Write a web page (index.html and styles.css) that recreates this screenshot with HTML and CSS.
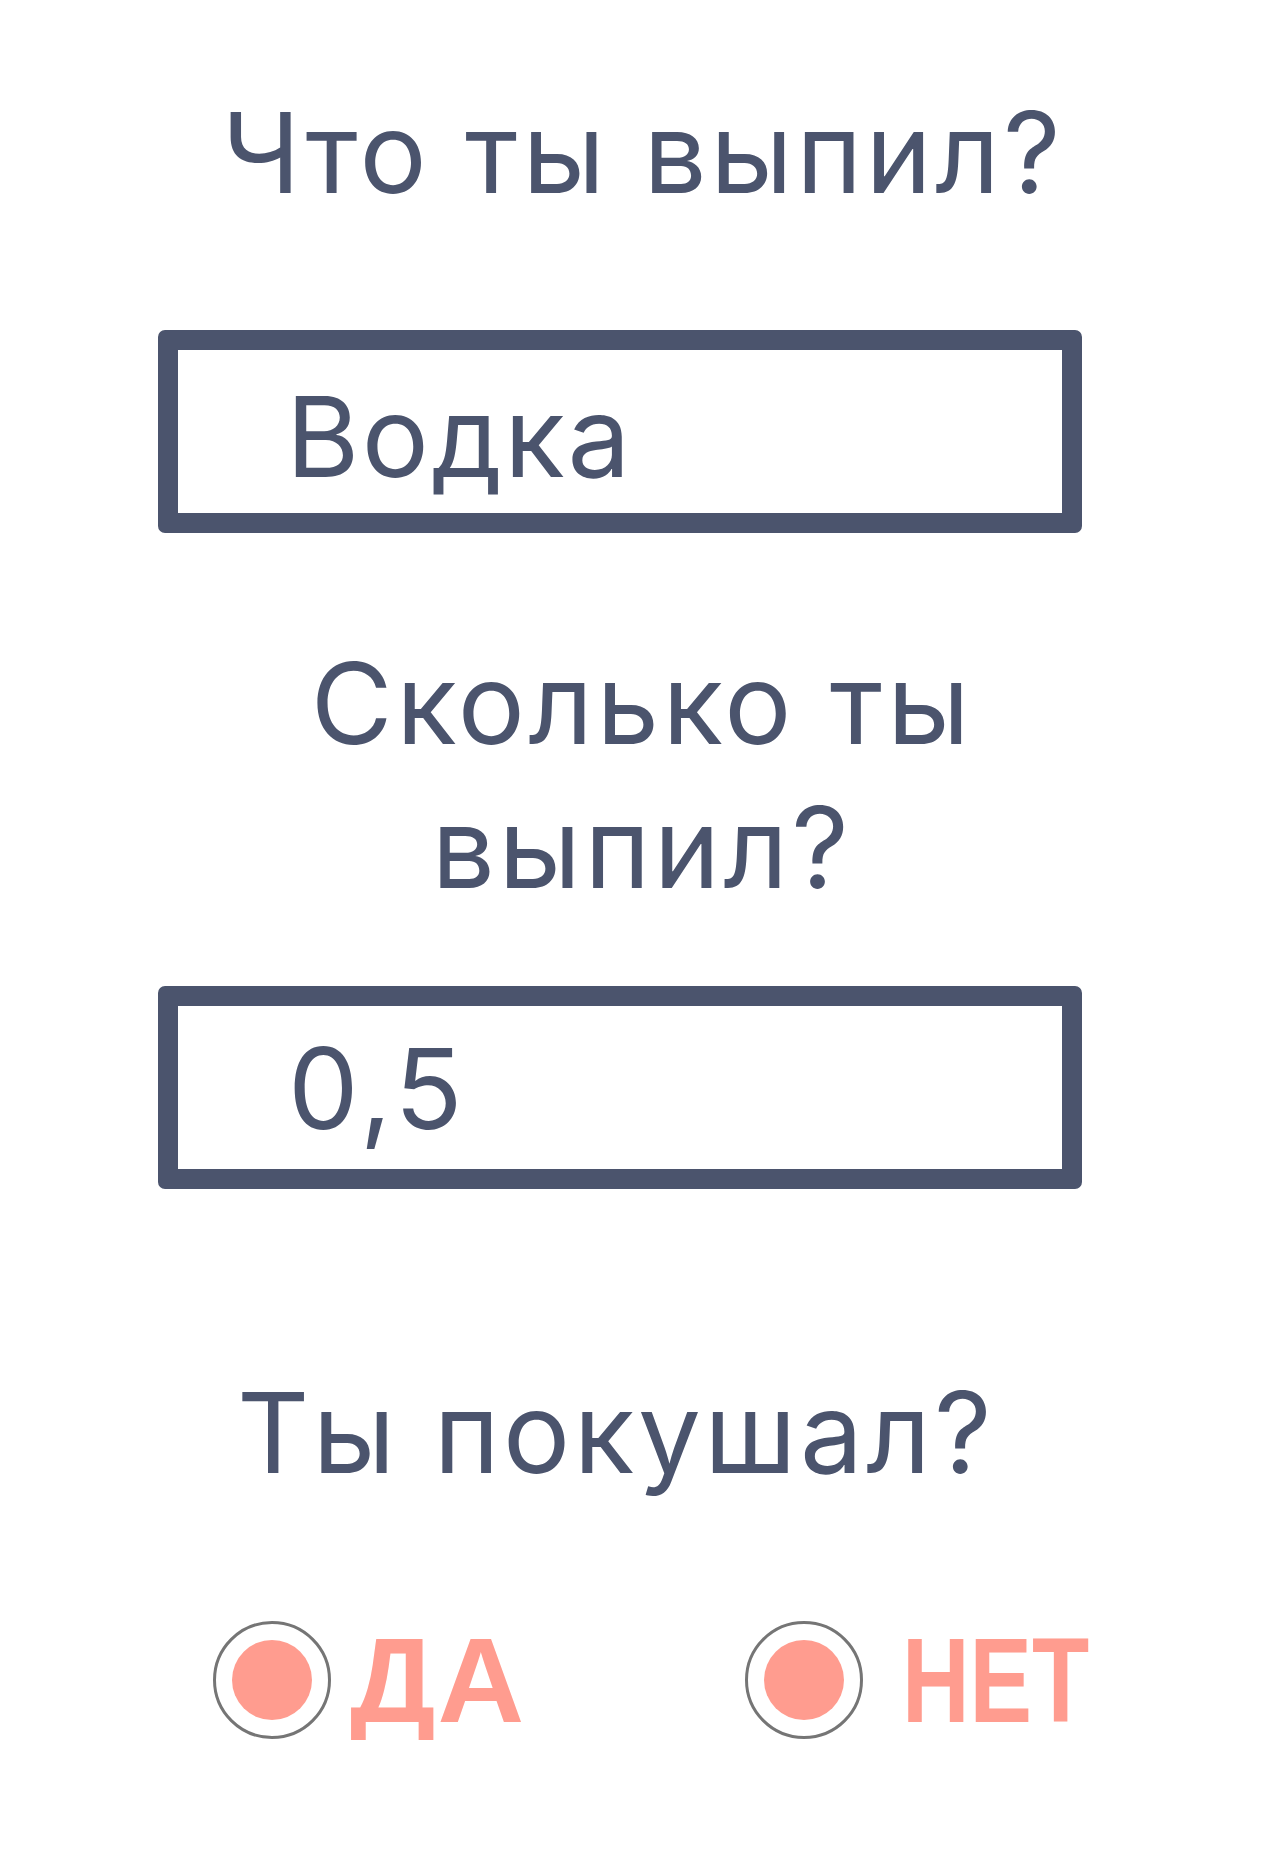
FILE: index.html
```html
<!DOCTYPE html>
<html lang="ru">
<head>
<meta charset="utf-8">
<title>Опрос</title>
<link rel="stylesheet" href="styles.css">
</head>
<body>
<form class="form">
  <h2 class="question question--shift">Что ты выпил?</h2>
  <input class="field field--first" type="text" value="Водка">
  <h2 class="question question--shift question--second">Сколько ты выпил?</h2>
  <input class="field field--second" type="text" value="0,5">
  <h2 class="question question--third">Ты покушал?</h2>
  <div class="choices">
    <label class="choice">
      <span class="radio"><span class="radio__dot"></span></span>
      <span class="choice__text choice__text--yes">ДА</span>
    </label>
    <label class="choice">
      <span class="radio"><span class="radio__dot"></span></span>
      <span class="choice__text choice__text--no">НЕТ</span>
    </label>
  </div>
</form>
</body>
</html>
```

FILE: styles.css
```css
* { box-sizing: border-box; }

html, body {
  margin: 0;
  padding: 0;
  background: #ffffff;
}

body {
  font-family: Inter, "Noto Sans", sans-serif;
  color: #4b546d;
}

.form {
  width: 924px;
  margin-left: 158px;
  padding-top: 80px;
  display: flex;
  flex-direction: column;
}

.question {
  margin: 0;
  font-size: 112px;
  line-height: 144px;
  font-weight: 400;
  letter-spacing: 3.5px;
  text-align: center;
  color: #4b546d;
}

.question--shift {
  padding-left: 46px;
  padding-right: 0;
}

.question--second {
  margin-top: 98px;
  padding-left: 84px;
  padding-right: 40px;
}

.question--third {
  margin-top: 171px;
  padding-right: 8px;
}

.field {
  display: block;
  width: 924px;
  height: 203px;
  border: 20px solid #4b546d;
  border-radius: 7px;
  padding: 0 0 0 108px;
  font-family: Inter, "Noto Sans", sans-serif;
  font-size: 112px;
  font-weight: 400;
  letter-spacing: 2.5px;
  color: #4b546d;
  background: #ffffff;
  outline: none;
}

.field--first {
  margin-top: 106px;
  padding-top: 9px;
}

.field--second {
  margin-top: 67px;
  padding-left: 110px;
  letter-spacing: 4px;
}

.choices {
  margin-top: 116px;
  padding-left: 55px;
  display: grid;
  grid-template-columns: 532px auto;
}

.choice {
  display: flex;
  align-items: center;
  gap: 19px;
}

.radio {
  width: 118px;
  height: 118px;
  border: 3px solid #757575;
  border-radius: 50%;
  display: flex;
  align-items: center;
  justify-content: center;
  flex: none;
}

.radio__dot {
  width: 80px;
  height: 80px;
  border-radius: 50%;
  background: #ff9c8f;
}

.choice__text {
  font-family: "Liberation Sans", Arial, sans-serif;
  font-weight: 700;
  font-size: 120px;
  line-height: 1;
  color: #ff9c8f;
  display: inline-block;
  transform-origin: left center;
}

.choice__text--yes {
  letter-spacing: 2px;
}

.choice__text--no {
  margin-left: 20px;
  transform: scaleX(0.78);
}
```
